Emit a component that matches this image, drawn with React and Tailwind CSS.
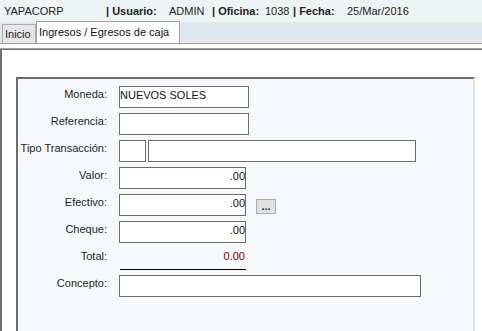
import React from 'react';

const Field = ({ w, value, right }) => (
  <div
    className={`h-[22px] bg-white border border-[#6b6b6b] pt-[2px] leading-[13px] text-[#111] ${right ? 'text-right pr-0' : 'pl-0'}`}
    style={{ width: w }}
  >
    {value}
  </div>
);

const Row = ({ label, children }) => (
  <div className="flex h-[22px]">
    <div className="w-[89px] shrink-0 text-right pt-[2px] leading-[13px] text-[#1d1d1d]">{label}</div>
    <div className="ml-[12px] flex">{children}</div>
  </div>
);

const App = () => {
  return (
    <div className="w-[482px] h-[331px] overflow-hidden bg-white text-[11px] font-['Liberation_Sans',Arial,sans-serif]">
      {/* Header */}
      <div className="h-[22px] bg-[#eef3f5] flex items-center pl-[4px] text-[#222] leading-none">
        <span className="w-[102px]">YAPACORP</span>
        <span className="w-[63px] font-bold">| Usuario:</span>
        <span className="w-[43px]">ADMIN</span>
        <span className="w-[53px] font-bold">| Oficina:</span>
        <span className="w-[28px]">1038</span>
        <span className="w-[54px] font-bold">| Fecha:</span>
        <span>25/Mar/2016</span>
      </div>

      {/* Tabs */}
      <div className="h-[22px] bg-[#dfe8f1] border-b border-[#a3a3a3] flex items-end pl-[2px]">
        <div className="h-[19px] w-[34px] bg-[#e6e6e6] border border-b-0 border-[#adadad] pl-[2px] pt-[3px] leading-[13px] text-[#222]">
          Inicio
        </div>
        <div className="h-[22px] w-[144px] bg-white border border-b-0 border-[#a3a3a3] pl-[2px] pt-[4px] leading-[13px] text-[#111]">
          Ingresos / Egresos de caja
        </div>
      </div>

      <div className="h-[4px]" />

      {/* Panel */}
      <div className="border-t border-[#a5a5a5]">
        <div className="border-t border-l-2 border-[#707070] pl-[14px] pt-[27px]">
          <div className="w-[459px] h-[260px] bg-[#f5f9fd] border-2 border-t-[#6b6b6b] border-l-[#6b6b6b] border-r-[#e2e2e2] border-b-[#e2e2e2] pt-[7px]">
            <div className="flex flex-col gap-[5px]">
              <Row label="Moneda:">
                <Field w={130} value="NUEVOS SOLES" />
              </Row>
              <Row label="Referencia:">
                <Field w={130} value="" />
              </Row>
              <Row label="Tipo Transacción:">
                <Field w={27} value="" />
                <div className="ml-[2px]">
                  <Field w={268} value="" />
                </div>
              </Row>
              <Row label="Valor:">
                <Field w={127} value=".00" right />
              </Row>
              <Row label="Efectivo:">
                <Field w={127} value=".00" right />
                <button className="ml-[10px] mt-[5px] w-[20px] h-[15px] bg-[#e1e1e1] border border-[#adadad] text-[11px] font-bold leading-[9px] text-[#1a1a6a] flex items-end justify-center pb-[2px]">
                  ...
                </button>
              </Row>
              <Row label="Cheque:">
                <Field w={127} value=".00" right />
              </Row>
              <Row label="Total:">
                <div className="ml-px w-[126px] h-[22px] border-b border-black text-right pr-px pt-[2px] leading-[13px] text-[#800000]">
                  0.00
                </div>
              </Row>
              <Row label="Concepto:">
                <Field w={302} value="" />
              </Row>
            </div>
          </div>
        </div>
      </div>
    </div>
  );
};

export default App;
